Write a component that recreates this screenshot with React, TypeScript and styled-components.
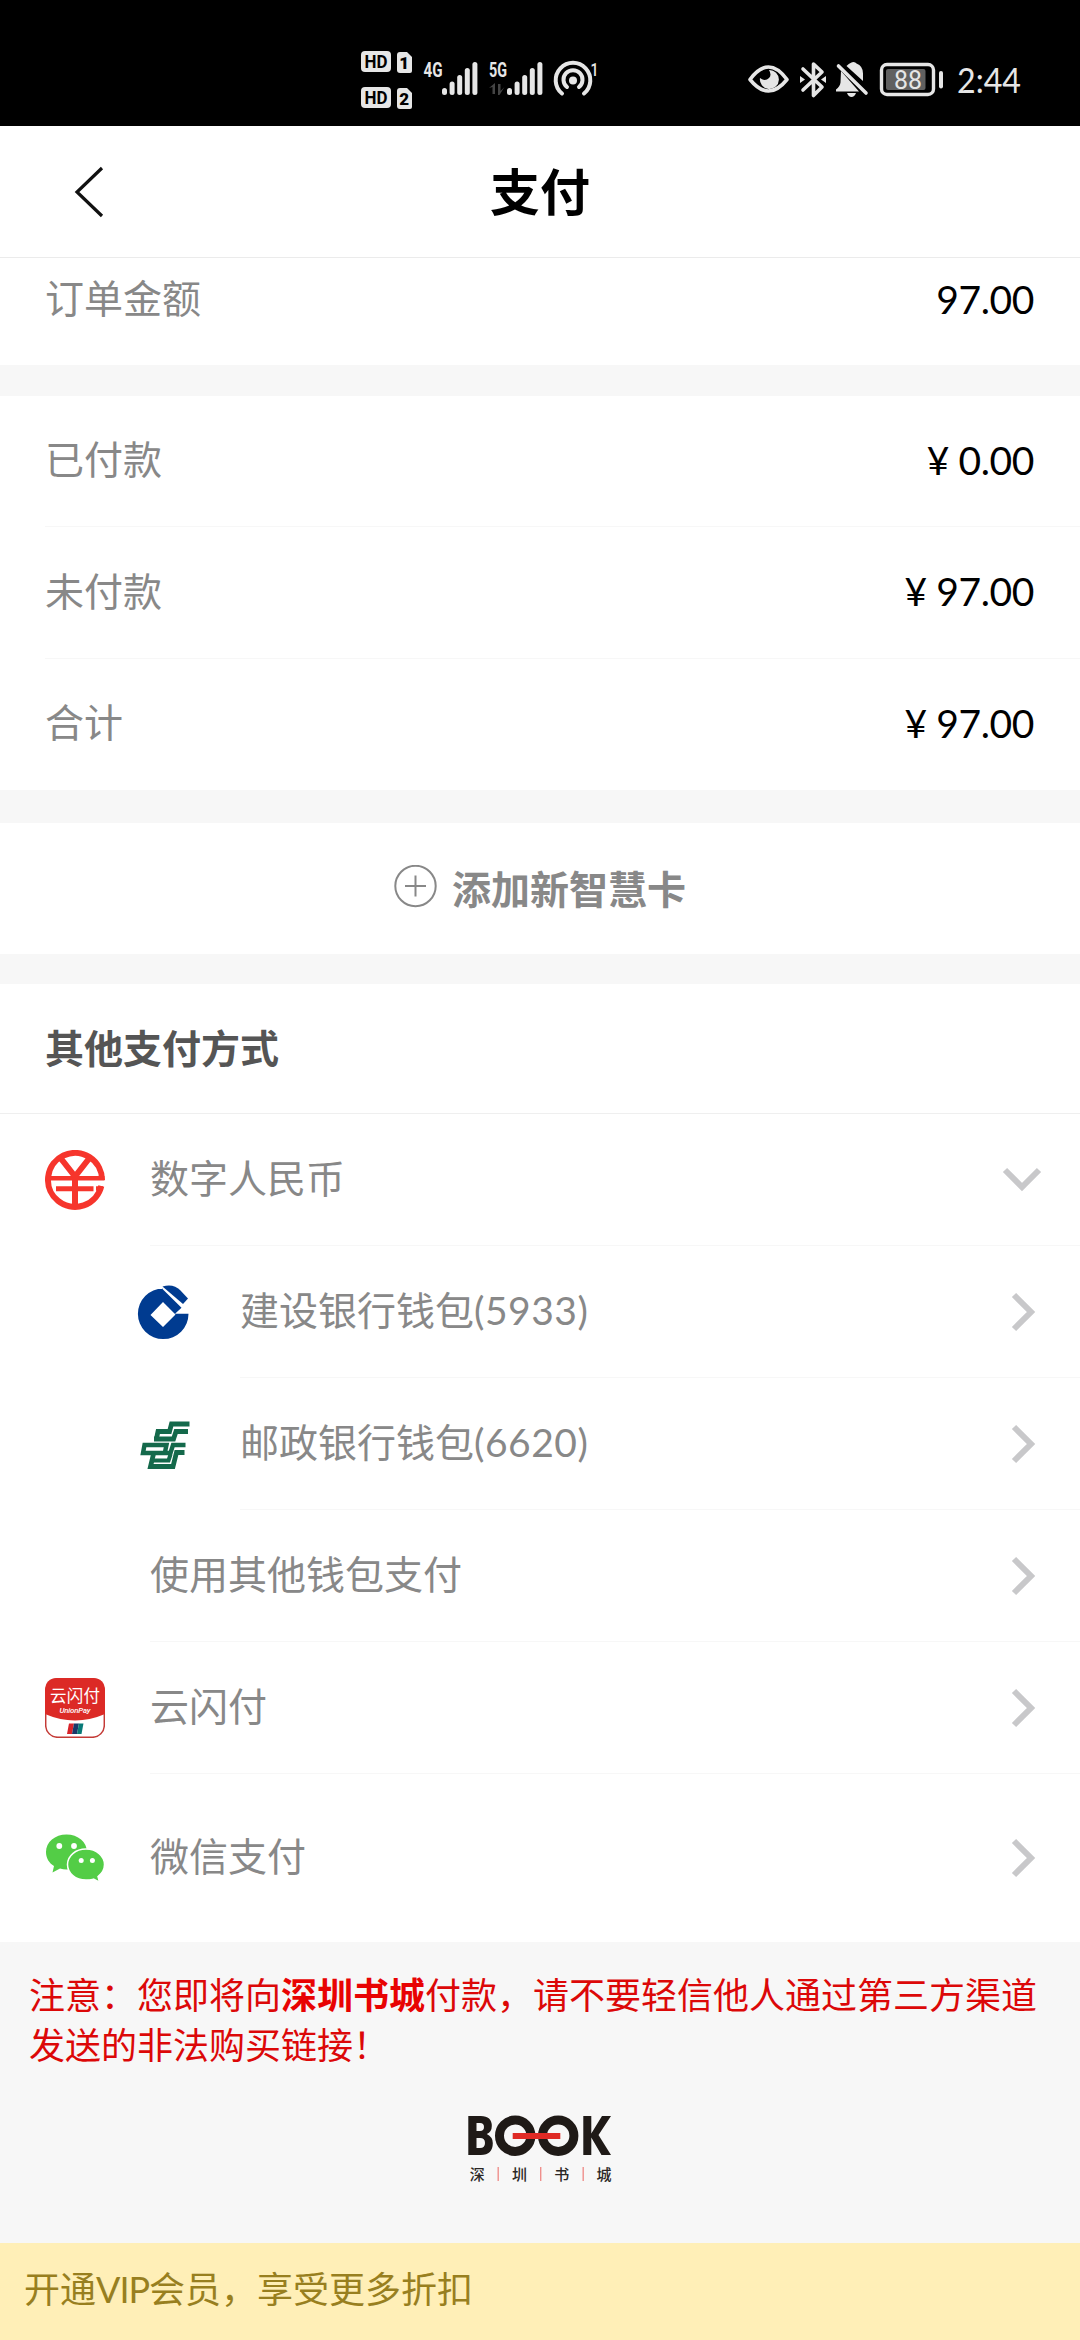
import React from "react";
import styled, { createGlobalStyle } from "styled-components";

const Global = createGlobalStyle`
  * { box-sizing: border-box; }
  html, body { margin: 0; padding: 0; background: #f7f7f7; }
  body { font-family: Lato, "Noto Sans CJK SC", sans-serif; }
`;

const Screen = styled.main`
  width: 1080px;
  height: 2340px;
  display: flex;
  flex-direction: column;
  background: #f7f7f7;
  overflow: hidden;
`;

const StatusBar = styled.header`
  height: 126px;
  flex: none;
  background: #000;
  color: #e6e6e6;
`;

const Nav = styled.nav`
  flex: none;
  height: 132px;
  display: grid;
  grid-template-columns: 180px 1fr 180px;
  align-items: center;
  background: #fff;
  border-bottom: 1px solid #ebebeb;
`;

const BackButton = styled.button`
  border: 0;
  padding: 0 0 0 74px;
  background: none;
  display: flex;
`;

const Title = styled.h1`
  margin: 0;
  padding-bottom: 6px;
  text-align: center;
  font: 700 50px/70px "Noto Sans CJK SC", sans-serif;
  color: #000;
`;

const Group = styled.section<{ $after?: number }>`
  flex: none;
  background: #fff;
  margin-bottom: ${(p) => p.$after ?? 0}px;
`;

const Row = styled.div<{ $height?: number; $shift?: number }>`
  height: ${(p) => p.$height ?? 132}px;
  margin-left: 45px;
  padding-right: 46px;
  padding-bottom: ${(p) => p.$shift ?? 0}px;
  display: flex;
  align-items: center;
  justify-content: space-between;
  border-bottom: 1px solid #f7f7f7;
  &:last-child { border-bottom-color: transparent; }
`;

const Label = styled.span`
  padding-bottom: 4px;
  font-size: 39px;
  line-height: 54px;
  color: #888;
`;

const Digits = styled.span`
  letter-spacing: 0.5px;
`;

const Amount = styled.span`
  padding-bottom: 3px;
  font-size: 39px;
  line-height: 54px;
  letter-spacing: -0.4px;
  color: #000;
`;

const AddCard = styled.button`
  width: 100%;
  height: 131px;
  border: 0;
  padding: 0 0 4px;
  background: #fff;
  display: flex;
  align-items: center;
  justify-content: center;
  gap: 15px;
  font: 700 39px/54px "Noto Sans CJK SC", sans-serif;
  color: #888;
`;

const Heading = styled.h2`
  margin: 0;
  height: 130px;
  padding-left: 45px;
  border-bottom: 1px solid #efefef;
  font: 700 39px/124px "Noto Sans CJK SC", sans-serif;
  color: #555;
`;

const Method = styled.div<{ $nested?: boolean; $height?: number }>`
  height: ${(p) => p.$height ?? 132}px;
  padding-left: ${(p) => (p.$nested ? 135 : 45)}px;
  display: flex;
`;

const IconCell = styled.span`
  width: 105px;
  flex: none;
  display: flex;
  align-items: center;
`;

const MethodBody = styled.div<{ $line?: boolean; $right: number }>`
  flex: 1;
  display: flex;
  align-items: center;
  justify-content: space-between;
  padding-right: ${(p) => p.$right}px;
  border-bottom: 1px solid ${(p) => (p.$line ? "#f7f7f7" : "transparent")};
`;

const Notice = styled.p`
  margin: 0;
  padding: 26px 0 0 29px;
  height: 160px;
  flex: none;
  font: 400 36px/50px "Noto Sans CJK SC", sans-serif;
  color: #dc0808;
  white-space: nowrap;
  b { color: #e80303; }
`;

const LogoRow = styled.div`
  flex: 1;
  display: flex;
  justify-content: center;
  padding-top: 12px;
`;

const VipBar = styled.footer`
  height: 97px;
  flex: none;
  padding-left: 24px;
  background: #ffefb7;
  color: #987f1f;
  font-size: 36px;
  line-height: 93px;
`;

const Vip = styled.span`
  letter-spacing: -1px;
`;

const StatusIcons = () => (
  <svg width="1080" height="126" viewBox="0 0 1080 126" fill="#e6e6e6">
    {[51, 87].map((y, i) => (
      <g key={y}>
        <rect x="361" y={y} width="30" height="21" rx="4" />
        <text x="376" y={y + 17} textAnchor="middle" fontFamily="Roboto" fontWeight="700" fontSize="19" textLength="23" lengthAdjust="spacingAndGlyphs" fill="#000">HD</text>
        <path d={`M400 ${y + 1}h7l5 5v14q0 2-2 2h-10q-3 0-3-3v-15q0-3 3-3z`} />
        <text x="404.300" y={y + 18} textAnchor="middle" fontFamily="Roboto" fontWeight="900" fontSize="17" fill="#000">{i + 1}</text>
      </g>
    ))}
    <text x="423.500" y="76.500" fontFamily="Roboto" fontWeight="700" fontSize="20" textLength="19" lengthAdjust="spacingAndGlyphs">4G</text>
    <text x="489" y="76.500" fontFamily="Roboto" fontWeight="700" fontSize="20" textLength="18" lengthAdjust="spacingAndGlyphs">5G</text>
    {[442, 507].map((x) => (
      <g key={x}>
        {[88, 81.5, 75, 68, 62].map((top, i) => (
          <rect key={top} x={x + i * 7.6} y={top} width="5" height={95 - top} rx="2.500" />
        ))}
      </g>
    ))}
    <path d="M489 88l6-5v11h-2.500v-7zM498 84h2.500v7l4-4-5 8h-1.500z" fill="#444" />
    <g fill="none" stroke="#e6e6e6" strokeWidth="4" strokeLinecap="round">
      <path d="M562 93.500a17.300 17.300 0 1 1 22 0" />
      <path d="M567 87a9.500 9.500 0 1 1 12 0" />
    </g>
    <circle cx="573" cy="80.500" r="4" />
    <text x="590.500" y="76" fontFamily="Roboto" fontWeight="500" fontSize="19" textLength="8" lengthAdjust="spacingAndGlyphs">1</text>

    <path d="M750 79.500q18.500-25 37 0q-18.500 23-37 0z" fill="none" stroke="#e6e6e6" strokeWidth="3.600" strokeLinejoin="round" />
    <path d="M769 70a9.500 9.500 0 1 1-9 8q5 4 9 0 3-3 0-8z" />
    <path d="M803 69l19 18-8.500 8.500V64l8.500 8-19 18" fill="none" stroke="#e6e6e6" strokeWidth="3.600" strokeLinejoin="round" strokeLinecap="round" />
    <path d="M800 76l5 3.500-5 3.500zM826 76l-5 3.500 5 3.500z" />
    <path d="M846.500 66q2-2.500 5-3.500.500-.500 2-.500 2 0 3 1.500 6.500 2.500 6.500 10v7.500zM841 71l18 20.500h-23v-2q4-3 4.500-7zM847 93h9q-1.500 4-4.500 4t-4.500-4z" />
    <path d="M838.500 66l27.500 27" stroke="#e6e6e6" strokeWidth="3.600" strokeLinecap="round" />
    <rect x="881.500" y="64.500" width="52" height="30" rx="5.500" fill="none" stroke="#e6e6e6" strokeWidth="3.400" />
    <rect x="886" y="69" width="39.500" height="21" rx="2" fill="#606060" />
    <rect x="939" y="71" width="4" height="17.500" rx="2" />
    <text x="908" y="89" textAnchor="middle" fontFamily="Roboto" fontSize="26" textLength="28" lengthAdjust="spacingAndGlyphs">88</text>
    <text x="957" y="92.500" fontFamily="Lato" fontSize="35" textLength="64" lengthAdjust="spacingAndGlyphs">2:44</text>
  </svg>
);

const ECny = () => (
  <svg width="60" height="60" viewBox="0 0 60 60" fill="none" stroke="#f6352c" strokeWidth="6">
    <path d="M57 30A27 27 0 1 0 56.300 36" />
    <path d="M3 28.200h56.500" strokeWidth="4.600" />
    <path d="M11 38.700h37.500" strokeWidth="5" />
    <path d="M51 38.500h7" strokeWidth="4.500" />
    <path d="M15.500 8l14.500 18.500L44.500 8M30 26v31" />
  </svg>
);

const Ccb = () => (
  <svg width="56" height="60" viewBox="0 0 56 60">
    <path d="M27 6.500L46.500 25.800 40 31.800h13.500A25.300 25.300 0 1 1 28 6.500zM28 20L15.500 33 28 45 40.500 32.500z" fill="#003b90" fillRule="evenodd" />
    <path d="M28.500 4.500C36 2 42 4 46 8l8 8.500-5 5.500z" fill="#003b90" transform="translate(-1 0)" />
  </svg>
);

const Psbc = () => (
  <svg width="60" height="60" viewBox="0 0 60 60" fill="none" stroke="#14694b" strokeWidth="4.800">
    <path d="M54.500 10H36.500l-2 7.500H23l-1.500 7" />
    <path d="M53 17.500H41L38.500 25H19" />
    <path d="M50.500 31H38l-2.500 8H8l1.500-8H31.500l-1.500 7" strokeWidth="4.400" />
    <path d="M49.500 38.500H41.500L38 52.500H15.500L18.500 40" />
    <path d="M35.500 40.500l-2 6H18" strokeWidth="4" />
  </svg>
);

const UnionPay = () => (
  <svg width="60" height="60" viewBox="0 0 60 60">
    <rect x=".7" y=".7" width="58.600" height="58.600" rx="12" fill="#fff" stroke="#c43a36" strokeWidth="1.500" />
    <path d="M0 36V13Q0 0 13 0h34q13 0 13 13v23q-30 13-60 0z" fill="#dc2a26" />
    <text x="30" y="24.300" textAnchor="middle" fontFamily="Noto Sans CJK SC" fontWeight="400" fontSize="16.500" fill="#fff" textLength="50">云闪付</text>
    <text x="30" y="34.500" textAnchor="middle" fontFamily="Roboto" fontStyle="italic" fontWeight="500" fontSize="7.800" fill="#fff" textLength="31">UnionPay</text>
    <path d="M24 45.500h5l-2 10.500h-5z" fill="#d8232a" />
    <path d="M29 45.500h5l-2 10.500h-5z" fill="#1b3768" />
    <path d="M34 45.500h4.500l-2 10.500H32z" fill="#087a78" />
  </svg>
);

const WeChat = () => (
  <svg width="60" height="60" viewBox="0 0 60 60">
    <g transform="translate(0 .6)">
      <path d="M21.500 6C33 6 42 13.500 42 23.500S33 41 21.500 41q-3.500 0-6.500-1l-7.500 3.800L9 37.500C4 34.500 1 29.500 1 23.500 1 13.500 10 6 21.500 6z" fill="#53cd46" />
      <path d="M41 20.500c10.500 0 18.500 6.800 18.500 15.500 0 5-2.500 9-6.500 12l1.500 5.500-6-3q-3.500 1-7.500 1c-10.500 0-18.500-6.800-18.500-15.500S30.500 20.500 41 20.500z" fill="#53cd46" stroke="#fff" strokeWidth="1.500" />
      <g fill="#fff"><circle cx="14.300" cy="17.400" r="2.900" /><circle cx="29" cy="17.400" r="2.900" /><circle cx="36.200" cy="32" r="2.500" /><circle cx="47.400" cy="32" r="2.500" /></g>
    </g>
  </svg>
);

const ChevronRight = () => (
  <svg width="26" height="40" viewBox="0 0 26 40" fill="none" stroke="#c8c8ca" strokeWidth="6">
    <path d="M3 3l17 17L3 37" />
  </svg>
);

const ChevronDown = () => (
  <svg width="40" height="26" viewBox="0 0 40 26" fill="none" stroke="#c8c8ca" strokeWidth="6">
    <path d="M3 3l17 17L37 3" />
  </svg>
);

const BookLogo = () => (
  <svg width="150" height="74" viewBox="0 0 150 74">
    <g fill="#1f1a17">
      <path fillRule="evenodd" d="M3.300 2h12.500q11 0 11 10 0 6-5 8 6 3 6 9 0 12-12 12H3.300zM11.500 9v8h3.500q4 0 4-4t-4-4zM11.500 24v10h3.500q5 0 5-5t-5-5z" />
      <path d="M118.300 2h8v17.500L137 2h9l-12.500 19L146 41h-9.500L126.300 23.500V41h-8z" />
    </g>
    <g fill="none" stroke="#1f1a17" strokeWidth="9"><circle cx="50.200" cy="21.700" r="15.700" /><circle cx="93.200" cy="21.700" r="15.700" /></g>
    <rect x="47.700" y="19" width="47.600" height="6" fill="#df2a25" />
    {["深", "圳", "书", "城"].map((c, i) => (
      <text key={c} x={12.3 + i * 42.2} y="66" textAnchor="middle" fontFamily="Noto Sans CJK SC" fontWeight="500" fontSize="15" fill="#2b2725">{c}</text>
    ))}
    {[33, 75.5, 118].map((x) => <rect key={x} x={x - 0.5} y="53" width="1.400" height="14" fill="#ef8f8c" />)}
  </svg>
);

type MethodItem = {
  label: string;
  digits?: string;
  icon?: React.ReactNode;
  nested?: boolean;
  open?: boolean;
  height?: number;
  last?: boolean;
};

const methods: MethodItem[] = [
  { label: "数字人民币", icon: <ECny />, open: true },
  { label: "建设银行钱包", digits: "(5933)", icon: <Ccb />, nested: true },
  { label: "邮政银行钱包", digits: "(6620)", icon: <Psbc />, nested: true },
  { label: "使用其他钱包支付" },
  { label: "云闪付", icon: <UnionPay /> },
  { label: "微信支付", icon: <WeChat />, height: 168, last: true },
];

export default function App() {
  return (
    <Screen>
      <Global />
      <StatusBar><StatusIcons /></StatusBar>
      <Nav>
        <BackButton aria-label="返回">
          <svg width="30" height="52" viewBox="0 0 30 52" fill="none" stroke="#111" strokeWidth="3.200">
            <path d="M28 2L3 26l25 24" />
          </svg>
        </BackButton>
        <Title>支付</Title>
      </Nav>
      <Group $after={31}>
        <Row $height={107} $shift={22}><Label>订单金额</Label><Amount>97.00</Amount></Row>
      </Group>
      <Group $after={33}>
        <Row $height={131}><Label>已付款</Label><Amount>¥ 0.00</Amount></Row>
        <Row><Label>未付款</Label><Amount>¥ 97.00</Amount></Row>
        <Row $height={131}><Label>合计</Label><Amount>¥ 97.00</Amount></Row>
      </Group>
      <Group $after={30}>
        <AddCard>
          <svg width="43" height="43" viewBox="0 0 43 43" fill="none" stroke="#888" strokeWidth="2">
            <circle cx="21.500" cy="21" r="20.200" />
            <path d="M11 21h21M21.500 10.500v21" />
          </svg>
          添加新智慧卡
        </AddCard>
      </Group>
      <Group>
        <Heading>其他支付方式</Heading>
        {methods.map((m) => (
          <Method key={m.label} $nested={m.nested} $height={m.height}>
            <IconCell>{m.icon}</IconCell>
            <MethodBody $line={!m.last} $right={m.open ? 38 : 43}>
              <Label>{m.label}{m.digits && <Digits>{m.digits}</Digits>}</Label>
              {m.open ? <ChevronDown /> : <ChevronRight />}
            </MethodBody>
          </Method>
        ))}
      </Group>
      <Notice>
        注意：您即将向<b>深圳书城</b>付款，请不要轻信他人通过第三方渠道<br />发送的非法购买链接！
      </Notice>
      <LogoRow><BookLogo /></LogoRow>
      <VipBar>开通<Vip>VIP</Vip>会员，享受更多折扣</VipBar>
    </Screen>
  );
}
